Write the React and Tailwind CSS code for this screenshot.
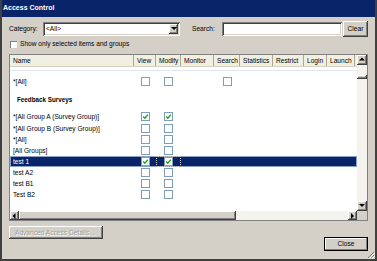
const raised =
  "bg-[#d4d0c8] shadow-[inset_-1px_-1px_0_#404040,inset_1px_1px_0_#ffffff,inset_-2px_-2px_0_#808080]";
const sunken =
  "bg-white shadow-[inset_1px_1px_0_#808080,inset_-1px_-1px_0_#ffffff,inset_2px_2px_0_#404040,inset_-2px_-2px_0_#d4d0c8]";

const cols = [
  { label: "Name", w: "w-[124px]" },
  { label: "View", w: "w-[22px]", key: "view" },
  { label: "Modify", w: "w-[25px]", key: "modify" },
  { label: "Monitor", w: "w-[33px]", key: "monitor" },
  { label: "Search", w: "w-[26px]", key: "search" },
  { label: "Statistics", w: "w-[33px]", key: "stats" },
  { label: "Restrict", w: "w-[31px]", key: "restrict" },
  { label: "Login", w: "w-[23px]", key: "login" },
  { label: "Launch", w: "w-[28px]", key: "launch" },
];

const rows = [
  { name: "*[All Group A (Survey Group)]", view: true, modify: true },
  { name: "*[All Group B (Survey Group)]", view: false, modify: false },
  { name: "*[All]", view: false, modify: false },
  { name: "[All Groups]", view: false, modify: false },
  { name: "test 1", view: true, modify: true, selected: true },
  { name: "test A2", view: false, modify: false },
  { name: "test B1", view: false, modify: false },
  { name: "Test B2", view: false, modify: false },
];

function Check({ on }) {
  return (
    <div className="w-[9px] h-[9px] bg-white border border-[#7f9db9] flex items-center justify-center">
      {on && (
        <svg width="7" height="7" viewBox="0 0 7 7">
          <path d="M1.2 3.6 L2.8 5.2 L5.8 1.8" fill="none" stroke="#21a121" strokeWidth="1.4" />
        </svg>
      )}
    </div>
  );
}

function Arrow({ dir }) {
  const pts = {
    up: "1,4.5 4,1.5 7,4.5",
    down: "1,2 4,5 7,2",
    left: "4.5,1 1.5,4 4.5,7",
    right: "2,1 5,4 2,7",
  }[dir];
  return (
    <svg width="8" height="8" viewBox="0 0 8 8">
      <polygon points={pts} fill="#000" />
    </svg>
  );
}

function Row({ row }) {
  const sel = row.selected;
  return (
    <div className={`flex h-[11.15px] leading-[11.15px] ${sel ? "bg-[#0a246a] text-white shadow-[inset_0_0_0_1px_#8da2c9]" : ""}`}>
      <div className="w-[124px] pl-[3px] whitespace-nowrap">{row.name}</div>
      <div className="w-[22px] flex items-center justify-center">
        {row.view !== undefined && <Check on={row.view} />}
      </div>
      <div className={`w-[25px] flex items-center justify-center ${sel ? "outline outline-1 outline-dotted outline-[#c8c8c8] -outline-offset-1" : ""}`}>
        {row.modify !== undefined && <Check on={row.modify} />}
      </div>
      <div className="flex-1" />
    </div>
  );
}

export default function App() {
  return (
    <div className="w-[377px] h-[261px] relative bg-[#d4d0c8] border-x-2 border-b-2 border-[#404040] font-['Liberation_Sans',Arial,sans-serif] text-[6.6px] text-black overflow-hidden">
      <div className="h-[17px] bg-[#0a246a] flex items-center pl-[1px] text-white font-bold text-[7px]">
        Access Control
      </div>

      <div className="px-[7px]">
        <div className="mt-[4px] h-[16px] flex items-center">
          <div className="w-[34px]">Category:</div>
          <div className={`w-[137px] h-[14px] ${sunken} flex items-center pl-[3px] pr-[2px]`}>
            <span className="flex-1">&lt;All&gt;</span>
            <div className={`w-[9px] h-[10px] ${raised} flex items-center justify-center`}>
              <Arrow dir="down" />
            </div>
          </div>
          <div className="w-[30px] ml-[12px]">Search:</div>
          <div className={`w-[120px] h-[14px] ${sunken}`} />
          <div className={`w-[25px] h-[16px] ml-[1px] ${raised} flex items-center justify-center`}>Clear</div>
        </div>

        <div className="mt-[3px] h-[8px] flex items-center">
          <div className="w-[7px] h-[7px] ml-[1px] bg-white shadow-[inset_1px_1px_0_#808080,inset_-1px_-1px_0_#ffffff]" />
          <span className="ml-[3px]">Show only selected items and groups</span>
        </div>

        <div className="mt-[6px] h-[167px] border border-[#808080] bg-white flex flex-col">
          <div className="flex flex-1 min-h-0">
            <div className="flex-1 overflow-hidden">
              <div className="flex h-[12px] bg-[#f1efe2] border-b border-[#d6d2c2]">
                {cols.map((c) => (
                  <div key={c.label} className={`${c.w} pl-[3px] leading-[12px] border-r border-[#aca899] whitespace-nowrap overflow-hidden`}>
                    {c.label}
                  </div>
                ))}
              </div>
              <div className="h-[3px]" />
              <div className="h-[1px] bg-[#dfe7f2]" />
              <div className="mt-[5px] flex h-[11px] leading-[11px]">
                <div className="w-[124px] pl-[3px]">*[All]</div>
                <div className="w-[22px] flex items-center justify-center"><Check on={false} /></div>
                <div className="w-[25px] flex items-center justify-center"><Check on={false} /></div>
                <div className="w-[33px]" />
                <div className="w-[26px] flex items-center justify-center"><Check on={false} /></div>
              </div>
              <div className="h-[24.4px] pt-[7px] pl-[7px] font-bold text-[6.3px] leading-[11px]">Feedback Surveys</div>
              {rows.map((r) => (
                <Row key={r.name} row={r} />
              ))}
              <div className="pt-[7px] pl-[7px] font-bold text-[6.3px] leading-[11px]">Personal Standards</div>
            </div>
            <div className="w-[10px] bg-[#f4f3ee] flex flex-col">
              <div className={`h-[10px] ${raised} flex items-center justify-center`}><Arrow dir="up" /></div>
              <div className="h-[10px]" />
              <div className={`h-[4px] ${raised}`} />
              <div className="flex-1" />
              <div className={`h-[10px] ${raised} flex items-center justify-center`}><Arrow dir="down" /></div>
            </div>
          </div>
          <div className="h-[9px] flex">
            <div className="flex-1 flex bg-[#f4f3ee]">
              <div className={`w-[9px] ${raised} flex items-center justify-center`}><Arrow dir="left" /></div>
              <div className={`w-[217px] ${raised}`} />
              <div className="flex-1" />
              <div className={`w-[9px] ${raised} flex items-center justify-center`}><Arrow dir="right" /></div>
            </div>
            <div className="w-[10px] bg-[#d4d0c8]" />
          </div>
        </div>

        <div className="mt-[5px] flex justify-between items-start">
          <div className={`w-[94px] h-[13px] ${raised} flex items-center pl-[6px] text-[#a0a0a0] [text-shadow:1px_1px_0_#ffffff]`}>
            Advanced Access Details...
          </div>
          <div className={`mt-[11px] w-[44px] h-[14px] ${raised} shadow-[inset_0_0_0_1px_#000,inset_-2px_-2px_0_#808080,inset_2px_2px_0_#ffffff] flex items-center justify-center`}>
            Close
          </div>
        </div>
      </div>

      <svg className="absolute right-[0px] bottom-[0px]" width="9" height="9" viewBox="0 0 9 9">
        <path d="M8 2 L2 8 M8 5 L5 8" stroke="#808080" strokeWidth="1" />
        <path d="M9 3 L3 9 M9 6 L6 9" stroke="#ffffff" strokeWidth="1" />
      </svg>
    </div>
  );
}
